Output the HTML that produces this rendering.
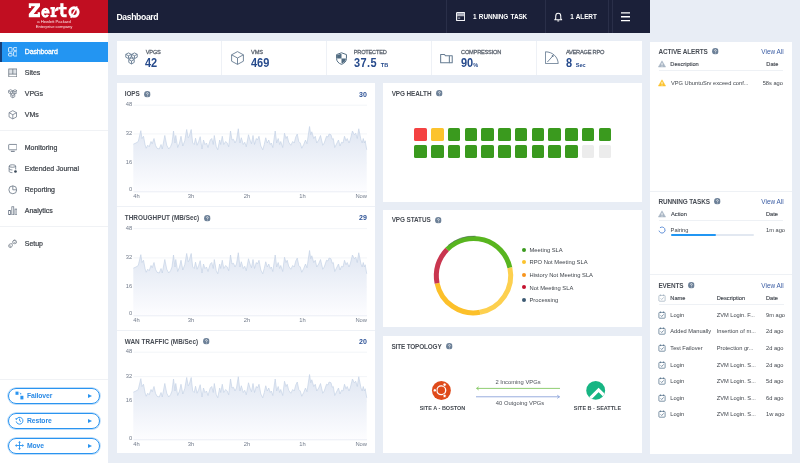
<!DOCTYPE html>
<html lang="en">
<head>
<meta charset="utf-8">
<title>Zerto - Dashboard</title>
<style>
*{box-sizing:border-box;margin:0;padding:0}
html,body{width:800px;height:463px;overflow:hidden}
body{position:relative;background:#e8edf5;font-family:"Liberation Sans",sans-serif;color:#3a3f47;font-size:6px;line-height:1}
#app{position:absolute;left:0;top:0;width:800px;height:463px;will-change:transform}
i{font-style:normal;display:inline-block}
.abs{position:absolute}
/* logo */
.logo{position:absolute;left:0;top:0;width:108px;height:33px;background:#c10e21;color:#fff;text-align:center}
.logo small{position:absolute;left:0;width:108px;font-size:4.2px;line-height:4.7px;top:20.4px;color:#fbe6e8;letter-spacing:-.03px}
/* topbar */
.topbar{position:absolute;left:108px;top:0;width:542px;height:33px;background:#1b2039;color:#fff}
.topbar h1{position:absolute;left:8.5px;top:11.5px;font-size:8.6px;font-weight:bold;letter-spacing:-.35px;line-height:10px}
.topbar .sep{position:absolute;top:0;width:1px;height:33px;background:#2a2f49}
.topbar .tx{position:absolute;top:13px;font-size:6.4px;font-weight:bold;line-height:7px;letter-spacing:-.08px;word-spacing:.7px;white-space:nowrap}
/* sidebar */
.side{position:absolute;left:0;top:33px;width:108px;height:430px;background:#fff}
.side .it{position:absolute;left:0;width:108px;height:20px;font-size:7px;font-weight:normal;color:#3f444b;-webkit-text-stroke:.22px #3f444b;line-height:20px;padding-left:24.8px;letter-spacing:-.02px}
.side .it svg{position:absolute;left:7.6px;top:5.2px;width:9.6px;height:9.6px}
.side .it.on{background:#2395f2;color:#fff;-webkit-text-stroke:.3px #fff;letter-spacing:-.14px;border-left:2px solid #173f78;padding-left:22.8px}
.side .it.on svg{left:5.6px}
.side hr{position:absolute;left:0;width:108px;border:0;border-top:1px solid #f0f2f5}
.btn{position:absolute;left:8px;width:92px;height:16.5px;border:1.2px solid #2a94f0;border-radius:9px;color:#2a8ae6;font-weight:bold;font-size:6.8px;line-height:14.2px;padding-left:18px;letter-spacing:-.1px;box-shadow:0 0 0 .7px #a9d2f7}
.btn svg{position:absolute;left:6px;top:2.6px;width:9px;height:9px}
.btn:after{content:"";position:absolute;right:7.4px;top:5.4px;border-left:4.4px solid #2a94f0;border-top:2.5px solid transparent;border-bottom:2.5px solid transparent}
/* kpis */
.kpis{position:absolute;left:116.8px;top:41.3px;width:525px;height:33.5px;background:#fff}
.kpi{position:absolute;top:0;width:105px;height:33.5px;border-left:1px solid #eef1f6}
.kpi:first-child{border-left:0}
.kpi svg{position:absolute;left:8.1px;top:10.3px;width:13px;height:13px}
.kpi .l{position:absolute;left:29px;top:8.5px;font-size:5.7px;color:#5d6570;font-weight:normal;-webkit-text-stroke:.26px #5d6570;letter-spacing:-.25px}
.kpi .v{position:absolute;left:28.7px;top:15.6px;font-size:12.2px;font-weight:bold;color:#264a8c;letter-spacing:0;line-height:13px;white-space:nowrap;transform:scaleX(.9);transform-origin:0 0}
.kpi .v small{font-size:6.2px;letter-spacing:0;margin-left:2.5px}
.k3 svg{left:8.2px}.k3 .l{left:27.2px}.k3 .v{left:27.2px;letter-spacing:.45px}.k3 .v small{margin-left:4.2px}.k4 svg{left:8.4px}.k4 .l,.k4 .v{left:29.2px}
/* panels */
.panel{position:absolute;background:#fff}
.pt{position:absolute;font-size:6.4px;font-weight:bold;color:#484d55;white-space:nowrap;line-height:8px;letter-spacing:-.1px}
.q{width:6.6px;height:6.6px;margin-left:4.6px;vertical-align:-1.1px;overflow:visible}
.chart{position:absolute;left:0;width:258.5px;height:124px;border-top:1px solid #eef1f6}
.chart:first-child{border-top:0}
.chart .plot{position:absolute;left:0;top:0}
.cv{position:absolute;right:8.5px;top:8.2px;font-size:7px;font-weight:bold;color:#2d5296;line-height:8px}
.yl{position:absolute;left:7px;width:8.5px;text-align:right;font-size:5.8px;color:#737c8c;line-height:7px}
.xl{position:absolute;top:110px;font-size:5.8px;color:#737c8c;line-height:7px}
.sq{position:absolute;width:12.6px;height:12.5px;border-radius:1.6px}
.lg{position:absolute;left:140.5px;font-size:5.8px;color:#3f444b;line-height:8px;white-space:nowrap}
.lg i{width:4px;height:4px;border-radius:50%;margin-right:4px;vertical-align:0.3px;margin-left:-2px}
/* right panel */
.rp{position:absolute;left:650px;top:41.5px;width:142px;height:412px;background:#fff}
.rp h3{position:absolute;left:8.4px}
.rp .va{position:absolute;right:8.4px;font-size:6.4px;color:#3a5ca3;line-height:8px}
.rp .hd,.rp .row{position:absolute;left:0;width:142px;height:8px;font-size:5.7px;line-height:8px;color:#41464d;white-space:nowrap}
.rp .hd{color:#454a52;-webkit-text-stroke:.15px #454a52}
.rp .ic{position:absolute;left:8.4px;top:0px;width:8px;height:8px}
.rp .c1{position:absolute;left:20.3px}
.rp .c2{position:absolute;left:66.7px}
.rp .c3{position:absolute;left:116px}
.rp hr{position:absolute;border:0;border-top:1px solid #eef1f5}
</style>
</head>
<body>
<div id="app">
<svg width="0" height="0" style="position:absolute">
<defs>
<symbol id="i-q" viewBox="0 0 8 8"><circle cx="4" cy="4" r="3.9" fill="#6d8198"/><path d="M2.9 3.2c0-.75.5-1.2 1.15-1.2.65 0 1.1.42 1.1 1 0 .9-1.1.9-1.1 1.9" fill="none" stroke="#fff" stroke-width="0.85"/><circle cx="4.05" cy="6.05" r="0.5" fill="#fff"/></symbol>
<symbol id="i-cal" viewBox="0 0 8 8"><rect x="0.9" y="1.4" width="6.2" height="5.8" rx="0.7" fill="none" stroke="#54708a" stroke-width="0.75"/><path d="M2.5 0.5v1.6M5.5 0.5v1.6" stroke="#54708a" stroke-width="0.75" fill="none"/><path d="M2.6 4.4l1.1 1.1 1.9-2.1" stroke="#54708a" stroke-width="0.75" fill="none"/></symbol>
<symbol id="i-tri" viewBox="0 0 8 8"><path d="M4 0.8L7.6 7H0.4Z" fill="#a9b6c4" stroke="#a9b6c4" stroke-width="0.5" stroke-linejoin="round"/><path d="M4 2.9v2.3M4 5.8v0.7" stroke="#fff" stroke-width="0.9"/></symbol>
</defs>
</svg>

<header class="logo"><svg class="abs" style="left:0;top:0" width="108" height="33" viewBox="0 0 108 33" role="img" aria-label="Zerto"><g fill="#fff">
<path d="M28.8 3.2H40V6.3L33.7 14.1H37.7V12.3H40V17.2H28.8V14.1L35.1 6.3H31.1V8.1H28.8Z"/>
<rect x="50.4" y="7" width="4.3" height="2.3"/><rect x="51.6" y="7" width="3.1" height="9"/><rect x="50.4" y="15" width="6.2" height="2.2"/>
<path d="M54.7 11.8C54.7 9 56 6.9 58.4 6.9V10.6C56.4 10.6 54.7 11.4 54.7 13.2Z"/>
<rect x="60.3" y="3.2" width="3.2" height="10.6"/><rect x="58.4" y="7" width="8.3" height="2.4"/>
</g>
<g fill="none" stroke="#fff">
<path d="M47.9 14.75A2.95 3.75 0 1 1 48.35 12.2H42.4" stroke-width="2.55"/>
<path d="M61.9 13V13.9A1.8 1.8 0 0 0 63.7 15.75H66.7" stroke-width="2.9"/>
<ellipse cx="74" cy="12.1" rx="4.15" ry="4.3" stroke-width="2.9"/>
<path d="M70.8 17.9L77.2 6.3" stroke-width="1.35"/>
</g></svg><small>a Hewlett Packard<br>Enterprise company</small></header>

<div class="topbar">
  <h1>Dashboard</h1>
  <i class="sep" style="left:338.3px"></i><i class="sep" style="left:437.3px"></i><i class="sep" style="left:499.8px"></i><i class="sep" style="left:504.2px"></i>
  <svg class="abs" style="left:347.8px;top:11.9px" width="9.3" height="9.3" viewBox="0 0 10 10"><rect x="0.65" y="0.65" width="8.7" height="8.7" rx="0.7" fill="none" stroke="#f2f3f6" stroke-width="1.3"/><rect x="1.3" y="1.3" width="7.4" height="2.3" fill="#aeb1bf"/><path d="M1.3 4h7.4" stroke="#fff" stroke-width="0.8"/><path d="M2.3 6.6h2.2" stroke="#d8dae2" stroke-width="1"/></svg>
  <span class="tx" style="left:365px">1 RUNNING TASK</span>
  <svg class="abs" style="left:444.5px;top:11.5px" width="10.5" height="10.5" viewBox="0 0 10 10"><path d="M5 1.2C3.4 1.2 2.6 2.5 2.6 4v2.2L1.7 7.4h6.6L7.4 6.2V4C7.4 2.5 6.6 1.2 5 1.2Z" fill="none" stroke="#fff" stroke-width="1" stroke-linejoin="round"/><path d="M4.1 8.5h1.8" stroke="#fff" stroke-width="1"/></svg>
  <span class="tx" style="left:462.2px">1 ALERT</span>
  <svg class="abs" style="left:512.5px;top:12px" width="9.5" height="9.5" viewBox="0 0 9.5 9.5"><path d="M0 0.8h9.2M0 4.75h9.2M0 8.7h9.2" stroke="#fff" stroke-width="1.3"/></svg>
</div>

<nav class="side">
  <div class="it on" style="top:9px"><svg viewBox="0 0 10 10"><g fill="none" stroke="#fff" stroke-width="0.8"><rect x="0.6" y="0.6" width="3.6" height="4.6" rx="0.5"/><rect x="5.8" y="0.6" width="3.6" height="2.9" rx="0.5"/><rect x="0.6" y="6.7" width="3.6" height="2.7" rx="0.5"/><rect x="5.8" y="4.9" width="3.6" height="4.5" rx="0.5"/></g></svg>Dashboard</div>
  <div class="it" style="top:29.6px"><svg viewBox="0 0 10 10"><rect x="0.8" y="1" width="8.4" height="5.4" fill="#dde1e6"/><g fill="none" stroke="#6b7682" stroke-width="0.8"><rect x="0.8" y="1" width="8.4" height="8.2"/><path d="M0.8 6.4h8.4M5 1v5.4"/></g></svg>Sites</div>
  <div class="it" style="top:51.3px"><svg viewBox="0 0 10 10"><g fill="none" stroke="#647080" stroke-width="0.7" stroke-linejoin="round"><path d="M2.7 0.7l2.1 1.1v2.2l-2.1 1.1L0.6 4V1.8Z"/><path d="M7.3 0.7l2.1 1.1v2.2l-2.1 1.1L5.2 4V1.8Z"/><path d="M5 4.7l2.1 1.1V8L5 9.2 2.9 8V5.8Z"/><path d="M0.6 1.8l2.1 1.1 2.1-1.1M2.7 2.9v2.2M5.2 1.8l2.1 1.1 2.1-1.1M7.3 2.9v2.2M2.9 5.8L5 6.9l2.1-1.1M5 6.9v2.3"/></g></svg>VPGs</div>
  <div class="it" style="top:72.3px"><svg viewBox="0 0 10 10"><g fill="none" stroke="#647080" stroke-width="0.75" stroke-linejoin="round"><path d="M5 0.7l3.9 2.1v4.4L5 9.3 1.1 7.2V2.8Z"/><path d="M1.1 2.8L5 4.9l3.9-2.1M5 4.9v4.4"/></g></svg>VMs</div>
  <hr style="top:97.2px">
  <div class="it" style="top:104.6px"><svg viewBox="0 0 10 10"><g fill="none" stroke="#647080" stroke-width="0.8"><rect x="0.7" y="1.5" width="8.6" height="5.6" rx="0.6"/><path d="M3 8.7h4" stroke-width="1"/></g></svg>Monitoring</div>
  <div class="it" style="top:126px"><svg viewBox="0 0 10 10"><g fill="none" stroke="#647080" stroke-width="0.8"><ellipse cx="4.6" cy="2.1" rx="3.4" ry="1.3"/><path d="M1.2 2.1v5.6c0 .7 1.5 1.3 3.4 1.3M8 2.1v3.6M1.2 4.9c0 .7 1.5 1.3 3.4 1.3"/></g><circle cx="7.8" cy="7.8" r="1.4" fill="#3b4a5a"/></svg>Extended Journal</div>
  <div class="it" style="top:147.2px"><svg viewBox="0 0 10 10"><g fill="none" stroke="#647080" stroke-width="0.8"><circle cx="5" cy="5" r="4.1"/><path d="M5 0.9V5h4.1"/></g></svg>Reporting</div>
  <div class="it" style="top:167.6px"><svg viewBox="0 0 10 10"><g fill="none" stroke="#647080" stroke-width="0.75"><rect x="0.7" y="4.8" width="2" height="4.5"/><rect x="4" y="0.8" width="2" height="8.5"/><rect x="7.3" y="3.2" width="2" height="6.1"/></g></svg>Analytics</div>
  <hr style="top:193.2px">
  <div class="it" style="top:201.1px"><svg viewBox="0 0 10 10"><g fill="none" stroke="#6b7682" stroke-width="0.8" stroke-linecap="round" stroke-linejoin="round"><path d="M6.3 1.3a2 2 0 0 1 2.6 2.6L7.7 2.9 7 3.6 8 4.7a2 2 0 0 1-2.2-.3L4.4 5.8a2 2 0 0 1-.3 2.1 2 2 0 0 1-2.6.8L2.7 7.5 2 6.8.9 7.9a2 2 0 0 1 2.6-2.7L4.9 3.8a2 2 0 0 1 1.4-2.5Z"/></g></svg>Setup</div>
  <hr style="top:346px">
  <div class="btn" style="top:354.5px"><svg viewBox="0 0 9 9"><g fill="#2a94f0"><rect x="0.5" y="0.6" width="3" height="3.2"/><rect x="5.4" y="4.8" width="3" height="3.6"/><path d="M4.4 1.2l2.4 1.9-1 .2.2 1z"/></g></svg>Failover</div>
  <div class="btn" style="top:379.5px"><svg viewBox="0 0 9 9"><g fill="none" stroke="#2a94f0" stroke-width="0.95"><path d="M1.5 3.2A3.4 3.4 0 1 1 1.2 5.4"/><path d="M4.6 2.6v2.1l1.4.9"/></g><path d="M0.2 2.2l2.3.2-1.3 1.8z" fill="#2a94f0"/></svg>Restore</div>
  <div class="btn" style="top:404.5px"><svg viewBox="0 0 9 9"><g fill="#2a94f0"><path d="M4.5 0l1.4 1.7H3.1zM4.5 9l1.4-1.7H3.1zM0 4.5l1.7-1.4v2.8zM9 4.5L7.3 3.1v2.8z"/><rect x="4.05" y="1.2" width="0.9" height="6.6"/><rect x="1.2" y="4.05" width="6.6" height="0.9"/></g></svg>Move</div>
</nav>

<section class="kpis">
  <div class="kpi" style="left:0"><svg viewBox="0 0 10 10"><g fill="none" stroke="#667c92" stroke-width="0.68" stroke-linejoin="round"><path d="M2.7 0.7l2.1 1.1v2.2l-2.1 1.1L0.6 4V1.8Z"/><path d="M7.3 0.7l2.1 1.1v2.2l-2.1 1.1L5.2 4V1.8Z"/><path d="M5 4.7l2.1 1.1V8L5 9.2 2.9 8V5.8Z"/><path d="M0.6 1.8l2.1 1.1 2.1-1.1M2.7 2.9v2.2M5.2 1.8l2.1 1.1 2.1-1.1M7.3 2.9v2.2M2.9 5.8L5 6.9l2.1-1.1M5 6.9v2.3"/></g></svg><span class="l">VPGS</span><span class="v">42</span></div>
  <div class="kpi" style="left:104.3px"><svg viewBox="0 0 13 14" style="left:9.1px;top:9.5px;width:13px;height:14px"><g fill="none" stroke="#667c92" stroke-width="0.9" stroke-linejoin="round"><path d="M6.5 0.6L12.4 3.8V10.2L6.5 13.4L0.6 10.2V3.8Z"/><path d="M0.6 3.8L6.5 7L12.4 3.8M6.5 7V13.4"/></g></svg><span class="l">VMS</span><span class="v">469</span></div>
  <div class="kpi k3" style="left:208.8px"><svg viewBox="0 0 10 10"><path d="M5 0.6L8.8 2v2.9c0 2.3-1.6 3.9-3.8 4.6C2.8 8.8 1.2 7.2 1.2 4.9V2Z" fill="none" stroke="#4f6a80" stroke-width="0.75" stroke-linejoin="round"/><path d="M5 1.3V5H1.6V2.4ZM5 5h3.4c0 1.9-1.5 3.3-3.4 3.9Z" fill="#4f6a80"/></svg><span class="l">PROTECTED</span><span class="v">37.5<small>TB</small></span></div>
  <div class="kpi k4" style="left:314.1px"><svg viewBox="0 0 10 10"><g fill="none" stroke="#667c92" stroke-width="0.8" stroke-linejoin="round"><path d="M0.5 1.9h2.9l.8 1h3v5.4H0.5Z"/><path d="M7.2 2.9h2.2v5.4H7.2"/></g></svg><span class="l">COMPRESSION</span><span class="v">90<small style="margin-left:0">%</small></span></div>
  <div class="kpi" style="left:419.1px"><svg viewBox="0 0 14 13.5" style="left:8.3px;top:9.6px;width:14px;height:13.5px"><g fill="none" stroke="#667c92" stroke-width="0.9" stroke-linejoin="round" stroke-linecap="round"><path d="M0.8 0.8C7.6 0.8 13 6 13.2 12.6H0.8Z"/><path d="M2.6 10.8L7.6 5.2"/></g><circle cx="7.7" cy="5.1" r="1" fill="#667c92"/></svg><span class="l">AVERAGE RPO</span><span class="v">8<small style="margin-left:4px">Sec</small></span></div>
</section>

<section class="panel" style="left:116.8px;top:82.6px;width:258.5px;height:370.7px">
<section class="chart" style="top:0px">
<h3 class="pt" style="left:8px;top:7.8px;letter-spacing:-0.1px">IOPS<svg class="q" viewBox="0 0 8 8"><use href="#i-q"/></svg></h3>
<div class="cv" style="top:8.2px">30</div>
<svg class="plot" width="259" height="124" viewBox="117 0 259 124">
<defs><linearGradient id="g1" x1="0" y1="0" x2="0" y2="1"><stop offset="0" stop-color="#dfe6f2"/><stop offset="1" stop-color="#fdfdff"/></linearGradient></defs>
<line x1="133.5" x2="367" y1="22.2" y2="22.2" stroke="#eef1f6" stroke-width="0.7"/>
<line x1="133.5" x2="367" y1="50.900000000000006" y2="50.900000000000006" stroke="#eef1f6" stroke-width="0.7"/>
<line x1="133.5" x2="367" y1="80.0" y2="80.0" stroke="#eef1f6" stroke-width="0.7"/>
<path d="M133.3,61.2 L136.0,60.0 L138.25,58.5 L140.8,47.7 L142.0,55.5 L143.5,53.25 L145.0,61.5 L146.2,65.25 L147.7,62.25 L149.2,63.75 L151.0,58.5 L152.2,60.75 L154.0,55.5 L155.5,62.25 L157.0,65.25 L159.25,66.0 L161.05,61.5 L162.25,66.0 L164.8,52.5 L166.75,62.25 L168.7,66.0 L170.5,63.75 L172.0,60.0 L173.5,48.0 L175.0,60.0 L175.75,52.5 L177.7,64.5 L179.5,60.0 L181.0,53.25 L182.8,63.0 L184.75,57.75 L186.7,46.5 L188.2,54.75 L189.25,53.25 L191.2,46.5 L192.7,60.0 L194.2,61.5 L195.55,55.2 L197.05,62.25 L198.7,58.5 L200.2,53.7 L202.0,66.0 L203.5,57.0 L205.0,61.5 L206.5,60.0 L208.0,64.5 L210.25,57.0 L211.75,55.5 L213.25,61.5 L214.3,52.5 L216.25,63.75 L217.75,66.75 L219.7,57.0 L220.75,61.5 L222.25,53.25 L223.75,61.5 L225.7,58.5 L227.2,60.0 L228.7,63.75 L230.5,48.0 L232.0,57.0 L233.5,56.25 L235.0,60.0 L236.5,57.0 L238.3,45.75 L239.95,60.0 L241.3,54.75 L243.25,61.5 L244.75,59.25 L246.25,63.75 L248.5,51.75 L250.0,57.0 L251.5,60.75 L253.0,52.5 L254.5,61.5 L256.3,55.5 L257.5,57.0 L259.0,53.25 L260.8,63.0 L262.75,66.75 L264.25,61.5 L265.75,54.75 L267.25,60.0 L268.75,57.0 L270.25,61.5 L271.3,60.0 L272.8,64.5 L275.2,48.0 L276.7,60.0 L278.2,55.5 L279.7,61.5 L280.75,58.5 L282.7,64.5 L284.5,50.25 L286.0,55.5 L287.2,53.25 L288.7,59.25 L290.8,62.25 L292.75,58.5 L294.25,60.0 L295.75,54.0 L297.25,51.0 L298.75,58.5 L300.25,60.0 L301.75,65.25 L303.7,61.5 L305.5,57.0 L307.0,60.75 L309.55,43.5 L310.75,51.75 L311.8,48.75 L313.75,55.5 L315.25,53.25 L316.75,60.0 L318.7,57.0 L320.5,52.5 L322.75,62.25 L324.25,60.0 L326.5,53.25 L328.0,54.0 L329.05,51.0 L331.0,51.75 L332.2,56.25 L333.25,55.5 L334.75,64.5 L337.0,60.0 L338.5,57.0 L340.0,63.0 L341.5,59.25 L343.0,60.0 L344.5,53.25 L346.0,57.75 L347.2,55.5 L349.0,60.0 L350.2,57.0 L352.45,48.0 L354.25,51.75 L355.75,50.25 L357.25,55.5 L358.75,45.75 L361.0,57.0 L362.2,60.0 L363.25,55.5 L364.3,60.0 L365.2,57.75 L366.7,66.75 L366.7,108.8 L133.3,108.8 Z" fill="url(#g1)"/>
<path d="M133.3,61.2 L136.0,60.0 L138.25,58.5 L140.8,47.7 L142.0,55.5 L143.5,53.25 L145.0,61.5 L146.2,65.25 L147.7,62.25 L149.2,63.75 L151.0,58.5 L152.2,60.75 L154.0,55.5 L155.5,62.25 L157.0,65.25 L159.25,66.0 L161.05,61.5 L162.25,66.0 L164.8,52.5 L166.75,62.25 L168.7,66.0 L170.5,63.75 L172.0,60.0 L173.5,48.0 L175.0,60.0 L175.75,52.5 L177.7,64.5 L179.5,60.0 L181.0,53.25 L182.8,63.0 L184.75,57.75 L186.7,46.5 L188.2,54.75 L189.25,53.25 L191.2,46.5 L192.7,60.0 L194.2,61.5 L195.55,55.2 L197.05,62.25 L198.7,58.5 L200.2,53.7 L202.0,66.0 L203.5,57.0 L205.0,61.5 L206.5,60.0 L208.0,64.5 L210.25,57.0 L211.75,55.5 L213.25,61.5 L214.3,52.5 L216.25,63.75 L217.75,66.75 L219.7,57.0 L220.75,61.5 L222.25,53.25 L223.75,61.5 L225.7,58.5 L227.2,60.0 L228.7,63.75 L230.5,48.0 L232.0,57.0 L233.5,56.25 L235.0,60.0 L236.5,57.0 L238.3,45.75 L239.95,60.0 L241.3,54.75 L243.25,61.5 L244.75,59.25 L246.25,63.75 L248.5,51.75 L250.0,57.0 L251.5,60.75 L253.0,52.5 L254.5,61.5 L256.3,55.5 L257.5,57.0 L259.0,53.25 L260.8,63.0 L262.75,66.75 L264.25,61.5 L265.75,54.75 L267.25,60.0 L268.75,57.0 L270.25,61.5 L271.3,60.0 L272.8,64.5 L275.2,48.0 L276.7,60.0 L278.2,55.5 L279.7,61.5 L280.75,58.5 L282.7,64.5 L284.5,50.25 L286.0,55.5 L287.2,53.25 L288.7,59.25 L290.8,62.25 L292.75,58.5 L294.25,60.0 L295.75,54.0 L297.25,51.0 L298.75,58.5 L300.25,60.0 L301.75,65.25 L303.7,61.5 L305.5,57.0 L307.0,60.75 L309.55,43.5 L310.75,51.75 L311.8,48.75 L313.75,55.5 L315.25,53.25 L316.75,60.0 L318.7,57.0 L320.5,52.5 L322.75,62.25 L324.25,60.0 L326.5,53.25 L328.0,54.0 L329.05,51.0 L331.0,51.75 L332.2,56.25 L333.25,55.5 L334.75,64.5 L337.0,60.0 L338.5,57.0 L340.0,63.0 L341.5,59.25 L343.0,60.0 L344.5,53.25 L346.0,57.75 L347.2,55.5 L349.0,60.0 L350.2,57.0 L352.45,48.0 L354.25,51.75 L355.75,50.25 L357.25,55.5 L358.75,45.75 L361.0,57.0 L362.2,60.0 L363.25,55.5 L364.3,60.0 L365.2,57.75 L366.7,66.75" fill="none" stroke="#c3d0e5" stroke-width="0.65" stroke-linejoin="round"/>
<line x1="133.5" x2="367" y1="108.8" y2="108.8" stroke="#e4e8f0" stroke-width="0.7"/>
</svg>
<span class="yl" style="top:18.5px">48</span><span class="yl" style="top:47.2px">32</span><span class="yl" style="top:76.3px">16</span><span class="yl" style="top:103.6px">0</span>
<span class="xl" style="left:16.5px">4h</span><span class="xl" style="left:64.30000000000001px;width:20px;text-align:center">3h</span><span class="xl" style="left:120.30000000000001px;width:20px;text-align:center">2h</span><span class="xl" style="left:175.60000000000002px;width:20px;text-align:center">1h</span><span class="xl" style="right:8.300000000000011px">Now</span>
</section>
<section class="chart" style="top:123.4px">
<h3 class="pt" style="left:8px;top:7.1px;letter-spacing:0.01px">THROUGHPUT (MB/Sec)<svg class="q" viewBox="0 0 8 8"><use href="#i-q"/></svg></h3>
<div class="cv" style="top:7.5px">29</div>
<svg class="plot" width="259" height="124" viewBox="117 0 259 124">
<defs><linearGradient id="g2" x1="0" y1="0" x2="0" y2="1"><stop offset="0" stop-color="#dfe6f2"/><stop offset="1" stop-color="#fdfdff"/></linearGradient></defs>
<line x1="133.5" x2="367" y1="21.599999999999998" y2="21.599999999999998" stroke="#eef1f6" stroke-width="0.7"/>
<line x1="133.5" x2="367" y1="50.900000000000006" y2="50.900000000000006" stroke="#eef1f6" stroke-width="0.7"/>
<line x1="133.5" x2="367" y1="80.0" y2="80.0" stroke="#eef1f6" stroke-width="0.7"/>
<path d="M133.3,61.2 L136.0,60.0 L138.25,58.5 L140.8,47.7 L142.0,55.5 L143.5,53.25 L145.0,61.5 L146.2,65.25 L147.7,62.25 L149.2,63.75 L151.0,58.5 L152.2,60.75 L154.0,55.5 L155.5,62.25 L157.0,65.25 L159.25,66.0 L161.05,61.5 L162.25,66.0 L164.8,52.5 L166.75,62.25 L168.7,66.0 L170.5,63.75 L172.0,60.0 L173.5,48.0 L175.0,60.0 L175.75,52.5 L177.7,64.5 L179.5,60.0 L181.0,53.25 L182.8,63.0 L184.75,57.75 L186.7,46.5 L188.2,54.75 L189.25,53.25 L191.2,46.5 L192.7,60.0 L194.2,61.5 L195.55,55.2 L197.05,62.25 L198.7,58.5 L200.2,53.7 L202.0,66.0 L203.5,57.0 L205.0,61.5 L206.5,60.0 L208.0,64.5 L210.25,57.0 L211.75,55.5 L213.25,61.5 L214.3,52.5 L216.25,63.75 L217.75,66.75 L219.7,57.0 L220.75,61.5 L222.25,53.25 L223.75,61.5 L225.7,58.5 L227.2,60.0 L228.7,63.75 L230.5,48.0 L232.0,57.0 L233.5,56.25 L235.0,60.0 L236.5,57.0 L238.3,45.75 L239.95,60.0 L241.3,54.75 L243.25,61.5 L244.75,59.25 L246.25,63.75 L248.5,51.75 L250.0,57.0 L251.5,60.75 L253.0,52.5 L254.5,61.5 L256.3,55.5 L257.5,57.0 L259.0,53.25 L260.8,63.0 L262.75,66.75 L264.25,61.5 L265.75,54.75 L267.25,60.0 L268.75,57.0 L270.25,61.5 L271.3,60.0 L272.8,64.5 L275.2,48.0 L276.7,60.0 L278.2,55.5 L279.7,61.5 L280.75,58.5 L282.7,64.5 L284.5,50.25 L286.0,55.5 L287.2,53.25 L288.7,59.25 L290.8,62.25 L292.75,58.5 L294.25,60.0 L295.75,54.0 L297.25,51.0 L298.75,58.5 L300.25,60.0 L301.75,65.25 L303.7,61.5 L305.5,57.0 L307.0,60.75 L309.55,43.5 L310.75,51.75 L311.8,48.75 L313.75,55.5 L315.25,53.25 L316.75,60.0 L318.7,57.0 L320.5,52.5 L322.75,62.25 L324.25,60.0 L326.5,53.25 L328.0,54.0 L329.05,51.0 L331.0,51.75 L332.2,56.25 L333.25,55.5 L334.75,64.5 L337.0,60.0 L338.5,57.0 L340.0,63.0 L341.5,59.25 L343.0,60.0 L344.5,53.25 L346.0,57.75 L347.2,55.5 L349.0,60.0 L350.2,57.0 L352.45,48.0 L354.25,51.75 L355.75,50.25 L357.25,55.5 L358.75,45.75 L361.0,57.0 L362.2,60.0 L363.25,55.5 L364.3,60.0 L365.2,57.75 L366.7,66.75 L366.7,108.8 L133.3,108.8 Z" fill="url(#g2)"/>
<path d="M133.3,61.2 L136.0,60.0 L138.25,58.5 L140.8,47.7 L142.0,55.5 L143.5,53.25 L145.0,61.5 L146.2,65.25 L147.7,62.25 L149.2,63.75 L151.0,58.5 L152.2,60.75 L154.0,55.5 L155.5,62.25 L157.0,65.25 L159.25,66.0 L161.05,61.5 L162.25,66.0 L164.8,52.5 L166.75,62.25 L168.7,66.0 L170.5,63.75 L172.0,60.0 L173.5,48.0 L175.0,60.0 L175.75,52.5 L177.7,64.5 L179.5,60.0 L181.0,53.25 L182.8,63.0 L184.75,57.75 L186.7,46.5 L188.2,54.75 L189.25,53.25 L191.2,46.5 L192.7,60.0 L194.2,61.5 L195.55,55.2 L197.05,62.25 L198.7,58.5 L200.2,53.7 L202.0,66.0 L203.5,57.0 L205.0,61.5 L206.5,60.0 L208.0,64.5 L210.25,57.0 L211.75,55.5 L213.25,61.5 L214.3,52.5 L216.25,63.75 L217.75,66.75 L219.7,57.0 L220.75,61.5 L222.25,53.25 L223.75,61.5 L225.7,58.5 L227.2,60.0 L228.7,63.75 L230.5,48.0 L232.0,57.0 L233.5,56.25 L235.0,60.0 L236.5,57.0 L238.3,45.75 L239.95,60.0 L241.3,54.75 L243.25,61.5 L244.75,59.25 L246.25,63.75 L248.5,51.75 L250.0,57.0 L251.5,60.75 L253.0,52.5 L254.5,61.5 L256.3,55.5 L257.5,57.0 L259.0,53.25 L260.8,63.0 L262.75,66.75 L264.25,61.5 L265.75,54.75 L267.25,60.0 L268.75,57.0 L270.25,61.5 L271.3,60.0 L272.8,64.5 L275.2,48.0 L276.7,60.0 L278.2,55.5 L279.7,61.5 L280.75,58.5 L282.7,64.5 L284.5,50.25 L286.0,55.5 L287.2,53.25 L288.7,59.25 L290.8,62.25 L292.75,58.5 L294.25,60.0 L295.75,54.0 L297.25,51.0 L298.75,58.5 L300.25,60.0 L301.75,65.25 L303.7,61.5 L305.5,57.0 L307.0,60.75 L309.55,43.5 L310.75,51.75 L311.8,48.75 L313.75,55.5 L315.25,53.25 L316.75,60.0 L318.7,57.0 L320.5,52.5 L322.75,62.25 L324.25,60.0 L326.5,53.25 L328.0,54.0 L329.05,51.0 L331.0,51.75 L332.2,56.25 L333.25,55.5 L334.75,64.5 L337.0,60.0 L338.5,57.0 L340.0,63.0 L341.5,59.25 L343.0,60.0 L344.5,53.25 L346.0,57.75 L347.2,55.5 L349.0,60.0 L350.2,57.0 L352.45,48.0 L354.25,51.75 L355.75,50.25 L357.25,55.5 L358.75,45.75 L361.0,57.0 L362.2,60.0 L363.25,55.5 L364.3,60.0 L365.2,57.75 L366.7,66.75" fill="none" stroke="#c3d0e5" stroke-width="0.65" stroke-linejoin="round"/>
<line x1="133.5" x2="367" y1="108.8" y2="108.8" stroke="#e4e8f0" stroke-width="0.7"/>
</svg>
<span class="yl" style="top:17.9px">48</span><span class="yl" style="top:47.2px">32</span><span class="yl" style="top:76.3px">16</span><span class="yl" style="top:103.3px">0</span>
<span class="xl" style="left:16.5px">4h</span><span class="xl" style="left:64.30000000000001px;width:20px;text-align:center">3h</span><span class="xl" style="left:120.30000000000001px;width:20px;text-align:center">2h</span><span class="xl" style="left:175.60000000000002px;width:20px;text-align:center">1h</span><span class="xl" style="right:8.300000000000011px">Now</span>
</section>
<section class="chart" style="top:247.3px">
<h3 class="pt" style="left:8px;top:7px;letter-spacing:0.01px">WAN TRAFFIC (MB/Sec)<svg class="q" viewBox="0 0 8 8"><use href="#i-q"/></svg></h3>
<div class="cv" style="top:7.4px">20</div>
<svg class="plot" width="259" height="124" viewBox="117 0 259 124">
<defs><linearGradient id="g3" x1="0" y1="0" x2="0" y2="1"><stop offset="0" stop-color="#dfe6f2"/><stop offset="1" stop-color="#fdfdff"/></linearGradient></defs>
<line x1="133.5" x2="367" y1="21.2" y2="21.2" stroke="#eef1f6" stroke-width="0.7"/>
<line x1="133.5" x2="367" y1="45.6" y2="45.6" stroke="#eef1f6" stroke-width="0.7"/>
<line x1="133.5" x2="367" y1="70.2" y2="70.2" stroke="#eef1f6" stroke-width="0.7"/>
<path d="M133.3,61.2 L136.0,60.0 L138.25,58.5 L140.8,47.7 L142.0,55.5 L143.5,53.25 L145.0,61.5 L146.2,65.25 L147.7,62.25 L149.2,63.75 L151.0,58.5 L152.2,60.75 L154.0,55.5 L155.5,62.25 L157.0,65.25 L159.25,66.0 L161.05,61.5 L162.25,66.0 L164.8,52.5 L166.75,62.25 L168.7,66.0 L170.5,63.75 L172.0,60.0 L173.5,48.0 L175.0,60.0 L175.75,52.5 L177.7,64.5 L179.5,60.0 L181.0,53.25 L182.8,63.0 L184.75,57.75 L186.7,46.5 L188.2,54.75 L189.25,53.25 L191.2,46.5 L192.7,60.0 L194.2,61.5 L195.55,55.2 L197.05,62.25 L198.7,58.5 L200.2,53.7 L202.0,66.0 L203.5,57.0 L205.0,61.5 L206.5,60.0 L208.0,64.5 L210.25,57.0 L211.75,55.5 L213.25,61.5 L214.3,52.5 L216.25,63.75 L217.75,66.75 L219.7,57.0 L220.75,61.5 L222.25,53.25 L223.75,61.5 L225.7,58.5 L227.2,60.0 L228.7,63.75 L230.5,48.0 L232.0,57.0 L233.5,56.25 L235.0,60.0 L236.5,57.0 L238.3,45.75 L239.95,60.0 L241.3,54.75 L243.25,61.5 L244.75,59.25 L246.25,63.75 L248.5,51.75 L250.0,57.0 L251.5,60.75 L253.0,52.5 L254.5,61.5 L256.3,55.5 L257.5,57.0 L259.0,53.25 L260.8,63.0 L262.75,66.75 L264.25,61.5 L265.75,54.75 L267.25,60.0 L268.75,57.0 L270.25,61.5 L271.3,60.0 L272.8,64.5 L275.2,48.0 L276.7,60.0 L278.2,55.5 L279.7,61.5 L280.75,58.5 L282.7,64.5 L284.5,50.25 L286.0,55.5 L287.2,53.25 L288.7,59.25 L290.8,62.25 L292.75,58.5 L294.25,60.0 L295.75,54.0 L297.25,51.0 L298.75,58.5 L300.25,60.0 L301.75,65.25 L303.7,61.5 L305.5,57.0 L307.0,60.75 L309.55,43.5 L310.75,51.75 L311.8,48.75 L313.75,55.5 L315.25,53.25 L316.75,60.0 L318.7,57.0 L320.5,52.5 L322.75,62.25 L324.25,60.0 L326.5,53.25 L328.0,54.0 L329.05,51.0 L331.0,51.75 L332.2,56.25 L333.25,55.5 L334.75,64.5 L337.0,60.0 L338.5,57.0 L340.0,63.0 L341.5,59.25 L343.0,60.0 L344.5,53.25 L346.0,57.75 L347.2,55.5 L349.0,60.0 L350.2,57.0 L352.45,48.0 L354.25,51.75 L355.75,50.25 L357.25,55.5 L358.75,45.75 L361.0,57.0 L362.2,60.0 L363.25,55.5 L364.3,60.0 L365.2,57.75 L366.7,66.75 L366.7,108.8 L133.3,108.8 Z" fill="url(#g3)"/>
<path d="M133.3,61.2 L136.0,60.0 L138.25,58.5 L140.8,47.7 L142.0,55.5 L143.5,53.25 L145.0,61.5 L146.2,65.25 L147.7,62.25 L149.2,63.75 L151.0,58.5 L152.2,60.75 L154.0,55.5 L155.5,62.25 L157.0,65.25 L159.25,66.0 L161.05,61.5 L162.25,66.0 L164.8,52.5 L166.75,62.25 L168.7,66.0 L170.5,63.75 L172.0,60.0 L173.5,48.0 L175.0,60.0 L175.75,52.5 L177.7,64.5 L179.5,60.0 L181.0,53.25 L182.8,63.0 L184.75,57.75 L186.7,46.5 L188.2,54.75 L189.25,53.25 L191.2,46.5 L192.7,60.0 L194.2,61.5 L195.55,55.2 L197.05,62.25 L198.7,58.5 L200.2,53.7 L202.0,66.0 L203.5,57.0 L205.0,61.5 L206.5,60.0 L208.0,64.5 L210.25,57.0 L211.75,55.5 L213.25,61.5 L214.3,52.5 L216.25,63.75 L217.75,66.75 L219.7,57.0 L220.75,61.5 L222.25,53.25 L223.75,61.5 L225.7,58.5 L227.2,60.0 L228.7,63.75 L230.5,48.0 L232.0,57.0 L233.5,56.25 L235.0,60.0 L236.5,57.0 L238.3,45.75 L239.95,60.0 L241.3,54.75 L243.25,61.5 L244.75,59.25 L246.25,63.75 L248.5,51.75 L250.0,57.0 L251.5,60.75 L253.0,52.5 L254.5,61.5 L256.3,55.5 L257.5,57.0 L259.0,53.25 L260.8,63.0 L262.75,66.75 L264.25,61.5 L265.75,54.75 L267.25,60.0 L268.75,57.0 L270.25,61.5 L271.3,60.0 L272.8,64.5 L275.2,48.0 L276.7,60.0 L278.2,55.5 L279.7,61.5 L280.75,58.5 L282.7,64.5 L284.5,50.25 L286.0,55.5 L287.2,53.25 L288.7,59.25 L290.8,62.25 L292.75,58.5 L294.25,60.0 L295.75,54.0 L297.25,51.0 L298.75,58.5 L300.25,60.0 L301.75,65.25 L303.7,61.5 L305.5,57.0 L307.0,60.75 L309.55,43.5 L310.75,51.75 L311.8,48.75 L313.75,55.5 L315.25,53.25 L316.75,60.0 L318.7,57.0 L320.5,52.5 L322.75,62.25 L324.25,60.0 L326.5,53.25 L328.0,54.0 L329.05,51.0 L331.0,51.75 L332.2,56.25 L333.25,55.5 L334.75,64.5 L337.0,60.0 L338.5,57.0 L340.0,63.0 L341.5,59.25 L343.0,60.0 L344.5,53.25 L346.0,57.75 L347.2,55.5 L349.0,60.0 L350.2,57.0 L352.45,48.0 L354.25,51.75 L355.75,50.25 L357.25,55.5 L358.75,45.75 L361.0,57.0 L362.2,60.0 L363.25,55.5 L364.3,60.0 L365.2,57.75 L366.7,66.75" fill="none" stroke="#c3d0e5" stroke-width="0.65" stroke-linejoin="round"/>
<line x1="133.5" x2="367" y1="108.8" y2="108.8" stroke="#e4e8f0" stroke-width="0.7"/>
</svg>
<span class="yl" style="top:17.5px">48</span><span class="yl" style="top:41.9px">32</span><span class="yl" style="top:66.5px">16</span><span class="yl" style="top:104.2px">0</span>
<span class="xl" style="left:16.5px">4h</span><span class="xl" style="left:64.30000000000001px;width:20px;text-align:center">3h</span><span class="xl" style="left:120.30000000000001px;width:20px;text-align:center">2h</span><span class="xl" style="left:175.60000000000002px;width:20px;text-align:center">1h</span><span class="xl" style="right:8.300000000000011px">Now</span>
</section>

</section>

<section class="panel" style="left:383px;top:83.2px;width:259px;height:118.8px">
<h3 class="pt" style="left:8.7px;top:6.5px">VPG HEALTH<svg class="q" viewBox="0 0 8 8"><use href="#i-q"/></svg></h3>
<i class="sq" style="left:31.30px;top:45.2px;background:#f44242"></i><i class="sq" style="left:48.05px;top:45.2px;background:#fcc32e"></i><i class="sq" style="left:64.80px;top:45.2px;background:#3a9a1e"></i><i class="sq" style="left:81.55px;top:45.2px;background:#3a9a1e"></i><i class="sq" style="left:98.30px;top:45.2px;background:#3a9a1e"></i><i class="sq" style="left:115.05px;top:45.2px;background:#3a9a1e"></i><i class="sq" style="left:131.80px;top:45.2px;background:#3a9a1e"></i><i class="sq" style="left:148.55px;top:45.2px;background:#3a9a1e"></i><i class="sq" style="left:165.30px;top:45.2px;background:#3a9a1e"></i><i class="sq" style="left:182.05px;top:45.2px;background:#3a9a1e"></i><i class="sq" style="left:198.80px;top:45.2px;background:#3a9a1e"></i><i class="sq" style="left:215.55px;top:45.2px;background:#3a9a1e"></i>
<i class="sq" style="left:31.30px;top:62.0px;background:#3a9a1e"></i><i class="sq" style="left:48.05px;top:62.0px;background:#3a9a1e"></i><i class="sq" style="left:64.80px;top:62.0px;background:#3a9a1e"></i><i class="sq" style="left:81.55px;top:62.0px;background:#3a9a1e"></i><i class="sq" style="left:98.30px;top:62.0px;background:#3a9a1e"></i><i class="sq" style="left:115.05px;top:62.0px;background:#3a9a1e"></i><i class="sq" style="left:131.80px;top:62.0px;background:#3a9a1e"></i><i class="sq" style="left:148.55px;top:62.0px;background:#3a9a1e"></i><i class="sq" style="left:165.30px;top:62.0px;background:#3a9a1e"></i><i class="sq" style="left:182.05px;top:62.0px;background:#3a9a1e"></i><i class="sq" style="left:198.80px;top:62.0px;background:#ececec"></i><i class="sq" style="left:215.55px;top:62.0px;background:#ececec"></i>

</section>

<section class="panel" style="left:383px;top:209.6px;width:259px;height:117.9px">
<h3 class="pt" style="left:8.7px;top:6.5px">VPG STATUS<svg class="q" viewBox="0 0 8 8"><use href="#i-q"/></svg></h3>
<svg class="abs" style="left:0;top:0" width="259" height="117.9" viewBox="383 209.6 259 117.9">
<path d="M447.10,249.04 A37.2,37.2 0 0 1 509.86,267.39" fill="none" stroke="#58b51f" stroke-width="5"/>
<path d="M509.86,267.39 A37.2,37.2 0 0 1 479.96,311.88" fill="none" stroke="#fdd04f" stroke-width="5"/>
<path d="M479.96,311.88 A37.2,37.2 0 0 1 437.07,282.79" fill="none" stroke="#fcc02a" stroke-width="5"/>
<path d="M437.07,282.79 A37.2,37.2 0 0 1 447.10,249.04" fill="none" stroke="#c9364f" stroke-width="5"/>
<path d="M448.11,244.99 A39.5,39.5 0 0 1 475.57,235.80" fill="none" stroke="#4a6a5a" stroke-width="0.6"/>

</svg>
<div class="lg" style="top:36.3px"><i style="background:#3a9a1e"></i>Meeting SLA</div>
<div class="lg" style="top:48.9px"><i style="background:#fcc32e"></i>RPO Not Meeting SLA</div>
<div class="lg" style="top:61.4px"><i style="background:#f7941d"></i>History Not Meeting SLA</div>
<div class="lg" style="top:74.0px"><i style="background:#c4122f"></i>Not Meeting SLA</div>
<div class="lg" style="top:86.5px"><i style="background:#3d5a73"></i>Processing</div>

</section>

<section class="panel" style="left:383px;top:336.3px;width:259px;height:116.9px">
<h3 class="pt" style="left:8.5px;top:6.4px;letter-spacing:-.16px">SITE TOPOLOGY<svg class="q" viewBox="0 0 8 8"><use href="#i-q"/></svg></h3>
<svg class="abs" style="left:0;top:0" width="259" height="116.9" viewBox="383 335.8 259 116.9">
  <circle cx="441.4" cy="390.3" r="9.45" fill="#df4a1a"/>
  <circle cx="441.3" cy="390.1" r="4.4" fill="none" stroke="#fff" stroke-width="1.35"/>
  <g fill="#fff" stroke="#df4a1a" stroke-width="0.7"><circle cx="434.9" cy="390.1" r="1.65"/><circle cx="444.6" cy="384.5" r="1.65"/><circle cx="444.6" cy="395.7" r="1.65"/></g>
  <clipPath id="rk"><circle cx="595.7" cy="390.2" r="9.45"/></clipPath>
  <circle cx="595.7" cy="390.2" r="9.45" fill="#17b583"/>
  <path d="M586.6 401.75L598.6 389.75L608.6 399.75" fill="none" stroke="#fff" stroke-width="3.2" stroke-linejoin="miter" clip-path="url(#rk)"/>
  <path d="M477 388.2h83" stroke="#74c24f" stroke-width="0.8"/><path d="M478.8 386.6l-2.4 1.6 2.4 1.6" fill="none" stroke="#74c24f" stroke-width="0.7"/>
  <path d="M476 396.6h83.4" stroke="#7c98d4" stroke-width="0.8"/><path d="M557.2 395l2.4 1.6-2.4 1.6" fill="none" stroke="#7c98d4" stroke-width="0.7"/>
</svg>
<div class="abs" style="left:18px;width:83px;top:67.6px;text-align:center;font-size:5.5px;font-weight:bold;color:#444950;line-height:8px;white-space:nowrap">SITE A - BOSTON</div>
<div class="abs" style="left:173px;width:83px;top:67.6px;text-align:center;font-size:5.5px;font-weight:bold;color:#444950;line-height:8px;white-space:nowrap">SITE B - SEATTLE</div>
<div class="abs" style="left:93px;width:84px;top:42px;text-align:center;font-size:5.8px;color:#4c5159;line-height:8px">2 Incoming VPGs</div>
<div class="abs" style="left:95px;width:84px;top:62.9px;text-align:center;font-size:5.8px;color:#4c5159;line-height:8px">40 Outgoing VPGs</div>
</section>

<aside class="rp">
  <h3 class="pt" style="top:6.2px">ACTIVE ALERTS<svg class="q" viewBox="0 0 8 8"><use href="#i-q"/></svg></h3><a class="va" style="top:6.2px">View All</a>
  <div class="hd" style="top:18.6px"><svg class="ic" viewBox="0 0 8 8"><use href="#i-tri"/></svg><span class="c1">Description</span><span class="c3" style="left:116.3px">Date</span></div>
  <hr style="left:8.6px;width:124.5px;top:28.5px">
  <div class="row" style="top:37px"><svg class="ic" viewBox="0 0 8 8"><path d="M4 0.8L7.6 7H0.4Z" fill="#fcc32e" stroke="#fcc32e" stroke-width="0.5" stroke-linejoin="round"/><path d="M4 2.9v2.3M4 5.8v0.7" stroke="#fff" stroke-width="0.9"/></svg><span class="c1" style="left:21px">VPG UbuntuSrv exceed conf...</span><span class="c3" style="left:112.7px">58s ago</span></div>
  <hr style="left:0;width:142px;top:149px">
  <h3 class="pt" style="top:156.3px">RUNNING TASKS<svg class="q" viewBox="0 0 8 8"><use href="#i-q"/></svg></h3><a class="va" style="top:156.3px">View All</a>
  <div class="hd" style="top:168.6px"><svg class="ic" viewBox="0 0 8 8"><use href="#i-tri"/></svg><span class="c1" style="left:21px">Action</span><span class="c3">Date</span></div>
  <hr style="left:8.6px;width:124.5px;top:178.5px">
  <div class="row" style="top:184.2px"><svg class="ic" viewBox="0 0 8 8"><path d="M2.3 1.5A3.05 3.05 0 1 1 1.1 5" fill="none" stroke="#5b8bd6" stroke-width="0.95" stroke-linecap="round"/></svg><span class="c1" style="left:20.6px">Pairing</span><span class="c3">1m ago</span></div>
  <i class="abs" style="left:21px;top:192.8px;width:83px;height:1.4px;background:#e2e8f1;border-radius:1px"></i><i class="abs" style="left:21px;top:192.8px;width:45px;height:1.4px;background:#2196f3;border-radius:1px"></i>
  <hr style="left:0;width:142px;top:232.4px">
  <h3 class="pt" style="top:240px">EVENTS<svg class="q" viewBox="0 0 8 8"><use href="#i-q"/></svg></h3><a class="va" style="top:240px">View All</a>
  <div class="hd" style="top:252.5px"><svg class="ic" viewBox="0 0 8 8" style="opacity:.55"><use href="#i-cal"/></svg><span class="c1">Name</span><span class="c2">Description</span><span class="c3">Date</span></div>
  <hr style="left:9px;width:125px;top:262.7px">
<div class="row" style="top:269.2px"><svg class="ic" viewBox="0 0 8 8"><use href="#i-cal"/></svg><span class="c1">Login</span><span class="c2">ZVM Login. F...</span><span class="c3">9m ago</span></div>
<div class="row" style="top:285.8px"><svg class="ic" viewBox="0 0 8 8"><use href="#i-cal"/></svg><span class="c1">Added Manually</span><span class="c2">Insertion of m...</span><span class="c3">2d ago</span></div>
<div class="row" style="top:302.4px"><svg class="ic" viewBox="0 0 8 8"><use href="#i-cal"/></svg><span class="c1">Test Failover</span><span class="c2">Protection gr...</span><span class="c3">2d ago</span></div>
<div class="row" style="top:319.1px"><svg class="ic" viewBox="0 0 8 8"><use href="#i-cal"/></svg><span class="c1">Login</span><span class="c2">ZVM Login. S...</span><span class="c3">2d ago</span></div>
<div class="row" style="top:335.7px"><svg class="ic" viewBox="0 0 8 8"><use href="#i-cal"/></svg><span class="c1">Login</span><span class="c2">ZVM Login. S...</span><span class="c3">5d ago</span></div>
<div class="row" style="top:352.3px"><svg class="ic" viewBox="0 0 8 8"><use href="#i-cal"/></svg><span class="c1">Login</span><span class="c2">ZVM Login. S...</span><span class="c3">6d ago</span></div>
<div class="row" style="top:368.9px"><svg class="ic" viewBox="0 0 8 8"><use href="#i-cal"/></svg><span class="c1">Login</span><span class="c2">ZVM Login. S...</span><span class="c3">1w ago</span></div>

</aside>
</div>
</body>
</html>
